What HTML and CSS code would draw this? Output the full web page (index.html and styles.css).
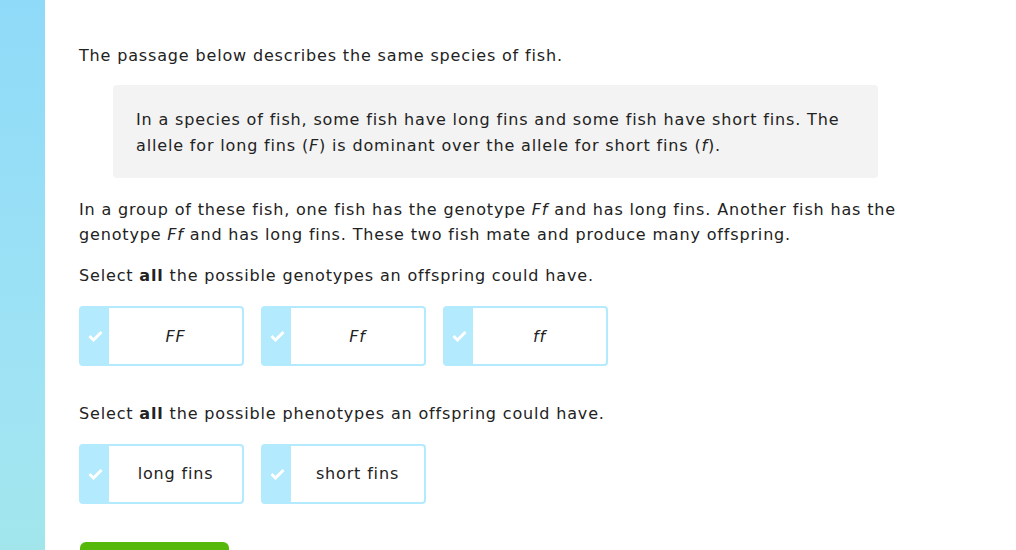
FILE: index.html
```html
<!DOCTYPE html>
<html>
<head>
<meta charset="utf-8">
<link rel="stylesheet" href="styles.css">
</head>
<body>
<div class="page">
  <aside class="sidebar"></aside>
  <main class="main">
    <p class="intro">The passage below describes the same species of fish.</p>
    <div class="passage">
      <p>In a species of fish, some fish have long fins and some fish have short fins. The allele for long fins (<i>F</i>) is dominant over the allele for short fins (<i>f</i>).</p>
    </div>
    <p class="para">In a group of these fish, one fish has the genotype <i>Ff</i> and has long fins. Another fish has the genotype <i>Ff</i> and has long fins. These two fish mate and produce many offspring.</p>
    <p class="prompt">Select <b>all</b> the possible genotypes an offspring could have.</p>
    <div class="choices">
      <div class="choice"><span class="tick"><svg width="15" height="12" viewBox="0 0 15 12"><polyline points="1.5,6 5.5,10 13.5,2" fill="none" stroke="#fff" stroke-width="3"/></svg></span><span class="label"><i>FF</i></span></div>
      <div class="choice"><span class="tick"><svg width="15" height="12" viewBox="0 0 15 12"><polyline points="1.5,6 5.5,10 13.5,2" fill="none" stroke="#fff" stroke-width="3"/></svg></span><span class="label"><i>Ff</i></span></div>
      <div class="choice"><span class="tick"><svg width="15" height="12" viewBox="0 0 15 12"><polyline points="1.5,6 5.5,10 13.5,2" fill="none" stroke="#fff" stroke-width="3"/></svg></span><span class="label"><i>ff</i></span></div>
    </div>
    <p class="prompt second">Select <b>all</b> the possible phenotypes an offspring could have.</p>
    <div class="choices row2">
      <div class="choice"><span class="tick"><svg width="15" height="12" viewBox="0 0 15 12"><polyline points="1.5,6 5.5,10 13.5,2" fill="none" stroke="#fff" stroke-width="3"/></svg></span><span class="label">long fins</span></div>
      <div class="choice"><span class="tick"><svg width="15" height="12" viewBox="0 0 15 12"><polyline points="1.5,6 5.5,10 13.5,2" fill="none" stroke="#fff" stroke-width="3"/></svg></span><span class="label">short fins</span></div>
    </div>
    <div class="submit"></div>
  </main>
</div>
</body>
</html>
```
FILE: styles.css
```css
html, body {
  margin: 0;
  padding: 0;
  height: 100%;
  overflow: hidden;
  background: #fff;
}
body {
  font-family: "DejaVu Sans", Verdana, sans-serif;
  font-size: 16px;
  letter-spacing: 0.84px;
  color: #222;
}
.page {
  display: flex;
  min-height: 550px;
}
.sidebar {
  width: 45px;
  flex: 0 0 45px;
  background: linear-gradient(to bottom, #8fdaf8 0%, #a0e4f4 70%, #a2e6ea 100%);
}
.main {
  padding: 43px 0 0 34px;
  width: 860px;
}
p {
  margin: 0;
  line-height: 25.6px;
}
.intro {
  margin-bottom: 16px;
}
.passage {
  margin-left: 34px;
  width: 719px;
  padding: 22px 23px 19px 23px;
  background: #f3f3f3;
  border-radius: 4px;
}
.passage p {
  line-height: 26px;
}
.para {
  margin-top: 19px;
  line-height: 25px;
}
.prompt {
  margin-top: 16px;
}
.prompt.second {
  margin-top: 35px;
}
.choices {
  display: flex;
  gap: 17px;
  margin-top: 18px;
}
.choices.row2 {
  margin-top: 17px;
}
.choice {
  display: flex;
  width: 165px;
  height: 60px;
  box-sizing: border-box;
  border: 2px solid #b3eafd;
  border-radius: 4px;
  background: #fff;
}
.tick {
  width: 28px;
  flex: 0 0 28px;
  background: #b3eafd;
  display: flex;
  align-items: center;
  justify-content: center;
}
.label {
  flex: 1;
  display: flex;
  align-items: center;
  justify-content: center;
  color: #222;
}
.submit {
  margin-top: 38px;
  margin-left: 1px;
  width: 149px;
  height: 40px;
  background: #55b80b;
  border-radius: 6px;
}
```
